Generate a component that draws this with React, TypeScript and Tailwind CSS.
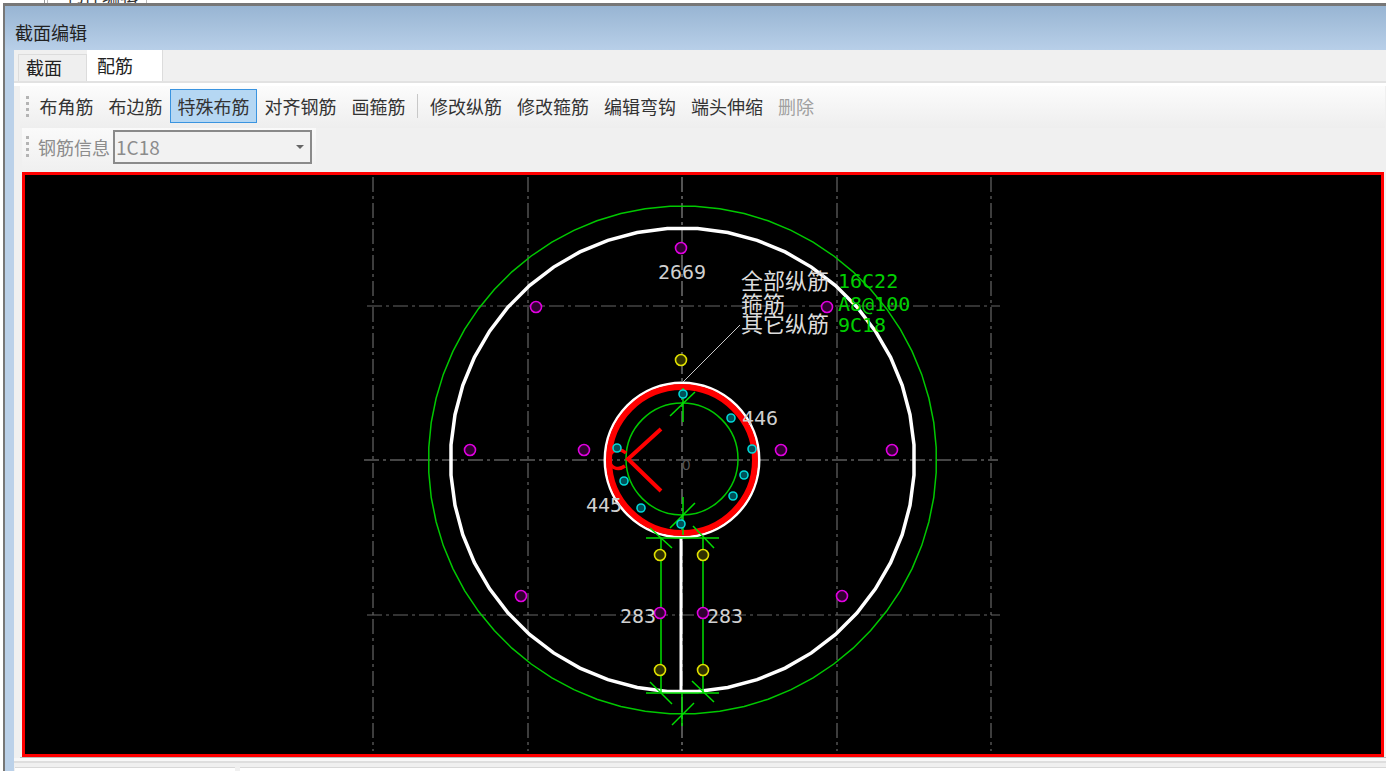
const cjk = "[font-family:'Noto_Sans_CJK_SC',sans-serif]";
const mono = "[font-family:'DejaVu_Sans_Mono','Noto_Sans_CJK_SC',monospace]";

const leftTools = ['布角筋', '布边筋', '特殊布筋', '对齐钢筋', '画箍筋'];
const rightTools = ['修改纵筋', '修改箍筋', '编辑弯钩', '端头伸缩'];

const magenta = [[681, 248], [536, 307], [827, 307], [470, 450], [584, 450], [781, 450], [892, 450], [521, 596], [842, 596], [660, 613], [703, 613]];
const yellow = [[681, 360], [660, 555], [703, 555], [660, 670], [703, 670]];
const cyan = [[683, 394], [731, 418], [617, 448], [752, 449], [624, 481], [744, 475], [733, 496], [641, 508], [681, 524]];

// green dimension ticks
const greenLines = [
  [683, 388, 683, 422], [670, 416, 695, 392],
  [683, 497, 683, 535], [670, 528, 695, 503],
  [646, 538, 719, 538], [646, 693, 719, 693],
  [661, 538, 661, 693], [703, 538, 703, 693],
  [650, 528, 672, 548], [693, 526, 714, 548],
  [650, 682, 672, 704], [692, 681, 714, 702],
  [682, 693, 682, 726], [672, 725, 694, 703],
];

const dashLines = [
  [364, 460, 998, 460, '#8a8a8a'], [367, 306, 1000, 306, '#666'], [367, 615, 1000, 615, '#666'],
  [682, 177, 682, 751, '#8a8a8a'], [373, 177, 373, 751, '#666'], [528, 177, 528, 751, '#666'],
  [837, 177, 837, 751, '#666'], [991, 177, 991, 751, '#666'],
] as const;

const labels = [
  ['2669', 658, 279], ['446', 742, 425], ['445', 586, 512], ['283', 620, 623], ['283', 707, 623],
] as const;

function ring(r: number, sides: number) {
  const pts = [];
  for (let i = 0; i < sides; i++) {
    const a = ((i + 0.5) / sides) * Math.PI * 2 + Math.PI / 2;
    pts.push(`${(682.5 + r * Math.cos(a)).toFixed(1)},${(460 + r * Math.sin(a)).toFixed(1)}`);
  }
  return pts.join(' ');
}

function Grip() {
  return (
    <div className="flex flex-col gap-[3px] w-[3px]">
      {[0, 1, 2, 3].map(i => (
        <div key={i} className="w-[3px] h-[3px] bg-[#b4b4b4]" />
      ))}
    </div>
  );
}

function Tool({ label, active, disabled }: { label: string; active?: boolean; disabled?: boolean }) {
  return (
    <div
      className={`h-[34px] px-[6.5px] flex items-center border whitespace-nowrap text-[18px] leading-none ${
        active ? 'bg-[#b5d7f3] border-[#3a94e0]' : 'border-transparent'
      } ${disabled ? 'text-[#a0a0a0]' : 'text-[#333]'}`}
    >
      {label}
    </div>
  );
}

function Section() {
  return (
    <svg viewBox="25 175 1356 579" className="block w-full h-full">
      {dashLines.map(([x1, y1, x2, y2, c], i) => (
        <line key={i} x1={x1} y1={y1} x2={x2} y2={y2} stroke={c} strokeWidth="1.2" strokeDasharray="15 4 3 4" />
      ))}

      <polygon points={ring(254, 64)} fill="none" stroke="#00c800" strokeWidth="1.5" />
      <polygon points={ring(232, 48)} fill="none" stroke="#fff" strokeWidth="3.5" />
      <circle cx="682" cy="459" r="56" fill="none" stroke="#00c800" strokeWidth="1.5" />
      <circle cx="682" cy="460" r="77" fill="none" stroke="#fff" strokeWidth="3" />
      <circle cx="682" cy="460" r="73" fill="none" stroke="#f00" strokeWidth="6" />

      <line x1="681" y1="537" x2="681" y2="693" stroke="#fff" strokeWidth="3" />
      {greenLines.map(([x1, y1, x2, y2], i) => (
        <line key={i} x1={x1} y1={y1} x2={x2} y2={y2} stroke="#00e000" strokeWidth="1.5" />
      ))}

      {/* stirrup hook */}
      <path d="M661 429 L628 459 L661 491" fill="none" stroke="#f00" strokeWidth="4" />
      <path d="M626 453 C619 447 610 450 609 459 C609 468 618 471 625 466" fill="none" stroke="#f00" strokeWidth="3.5" />

      {magenta.map(([x, y], i) => (
        <circle key={i} cx={x} cy={y} r="5.5" fill="#300030" stroke="#e000e0" strokeWidth="1.6" />
      ))}
      {yellow.map(([x, y], i) => (
        <circle key={i} cx={x} cy={y} r="5.5" fill="#303000" stroke="#e0e000" strokeWidth="1.6" />
      ))}
      {cyan.map(([x, y], i) => (
        <circle key={i} cx={x} cy={y} r="4" fill="#005058" stroke="#00d8d8" strokeWidth="1.6" />
      ))}

      <line x1="683" y1="382" x2="740" y2="325" stroke="#c8c8c8" strokeWidth="1" />

      {labels.map(([t, x, y], i) => (
        <text key={i} x={x} y={y} fontSize="20" fill="#d0d0d0" className={mono}>{t}</text>
      ))}
      <text x="682" y="470" fontSize="15" fill="#555" className="[font-family:'Liberation_Sans',sans-serif]">0</text>

      <text x="741" y="289" fontSize="22" fill="#dcdcdc" className={cjk}>全部纵筋</text>
      <text x="741" y="312" fontSize="22" fill="#dcdcdc" className={cjk}>箍筋</text>
      <text x="741" y="332" fontSize="22" fill="#dcdcdc" className={cjk}>其它纵筋</text>
      <text x="838" y="288" fontSize="20" fill="#00d000" className={mono}>16C22</text>
      <text x="838" y="311" fontSize="20" fill="#00d000" className={mono}>A8@100</text>
      <text x="838" y="332" fontSize="20" fill="#00d000" className={mono}>9C18</text>
    </svg>
  );
}

export default function App() {
  return (
    <div className={`w-[1386px] h-[771px] overflow-hidden bg-white flex flex-col ${cjk}`}>
      {/* window behind, only its bottom edge shows */}
      <div className="h-[3px] overflow-hidden flex">
        <div className="ml-[9px] w-[36px] h-full border-r border-[#999]" />
        <div className="ml-[2px] w-[100px] h-full border-x border-[#bbb] pl-[18px] text-[18px] leading-none text-[#333] whitespace-nowrap">
          <div className="-mt-[15px]">构件编辑</div>
        </div>
      </div>

      <div className="flex-1 min-h-0 ml-[3px] border-t-[3px] border-l-2 border-[#777] flex flex-col">
        <div className="h-[44px] shrink-0 flex items-end pb-[6px] pl-[10px] bg-gradient-to-b from-[#98b5d3] to-[#b8cfe8] text-[18px] leading-[24px] text-[#222]">
          截面编辑
        </div>

        <div className="flex-1 min-h-0 flex">
          <div className="w-[9px] shrink-0 bg-[#bbd1e9]" />
          <div className="flex-1 min-w-0 flex flex-col bg-[#f0f0f0]">
            {/* tabs */}
            <div className="h-[33px] shrink-0 flex items-end pl-[4px] border-b-2 border-[#e2e2e2]">
              <div className="w-[69px] h-[27px] bg-[#efefef] border border-b-0 border-[#dcdcdc] pl-[7px] text-[18px] leading-[24px] text-[#222]">截面</div>
              <div className="w-[76px] h-[31px] bg-white border-r border-[#dcdcdc] pl-[10px] text-[18px] leading-[30px] text-[#222]">配筋</div>
            </div>

            {/* toolbars */}
            <div className="h-[3px] shrink-0 bg-white" />
            <div className="h-[42px] shrink-0 ml-[6px] mr-px flex items-center pl-[6px] pb-[2px] bg-gradient-to-b from-[#fcfcfc] to-[#eeeeee]">
              <Grip />
              <div className="ml-[3px] flex items-center">
                {leftTools.map(t => (
                  <Tool key={t} label={t} active={t === '特殊布筋'} />
                ))}
                <div className="w-[9.5px] flex justify-center">
                  <div className="w-px h-[24px] bg-[#c8c8c8]" />
                </div>
                {rightTools.map(t => (
                  <Tool key={t} label={t} />
                ))}
                <Tool label="删除" disabled />
              </div>
            </div>
            <div className="h-[42px] shrink-0 ml-[8px] w-[294px] flex items-center pl-[4px] pb-[5px] bg-gradient-to-b from-[#fafafa] to-[#f0f0f0] text-[18px] text-[#8c8c8c]">
              <Grip />
              <span className="ml-[9px] leading-none whitespace-nowrap">钢筋信息</span>
              <div className="ml-[3px] w-[199px] h-[34px] border-2 border-[#8a8a8a] flex items-center justify-between pl-[1px] pr-[6px] bg-[#f2f2f2]">
                <span className="leading-none text-[19px]">1C18</span>
                <div className="w-0 h-0 border-x-[4px] border-x-transparent border-t-[4px] border-t-[#666]" />
              </div>
            </div>

            {/* section canvas */}
            <div className="h-[2px] shrink-0" />
            <div className="h-[585px] shrink-0 ml-[8px] border-[3px] border-[#f00] bg-black mr-[2px]">
              <Section />
            </div>

            {/* bottom panels */}
            <div className="h-px shrink-0 ml-[6px] bg-[#bbb]" />
            <div className="flex-1 min-h-0 flex flex-col">
              <div className="h-[3px] shrink-0 bg-[#f8f8f8]" />
              <div className="h-[2px] shrink-0 bg-[#dedede]" />
              <div className="h-[4px] shrink-0" />
              <div className="flex-1 flex gap-[5px] pl-px">
                <div className="w-[220px] bg-white border-t border-[#d8d8d8]" />
                <div className="flex-1 bg-white border-t border-[#d8d8d8]" />
              </div>
            </div>
          </div>
        </div>
      </div>
    </div>
  );
}
